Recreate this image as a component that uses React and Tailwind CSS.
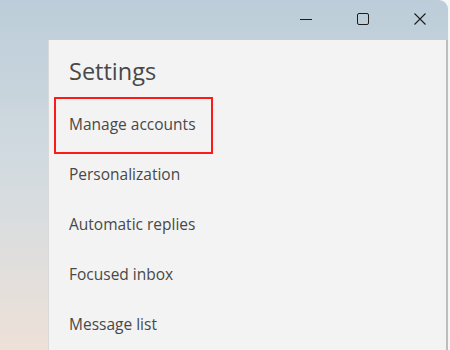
const items = ["Manage accounts", "Personalization", "Automatic replies", "Focused inbox", "Message list"];

const Min = () => (
  <svg width="12" height="12" viewBox="0 0 12 12"><path d="M0 6.5h12" stroke="#1c1c1c" strokeWidth="1" /></svg>
);
const Max = () => (
  <svg width="12" height="12" viewBox="0 0 12 12"><rect x="0.5" y="0.5" width="11" height="11" rx="1.5" fill="none" stroke="#1c1c1c" strokeWidth="1" /></svg>
);
const Close = () => (
  <svg width="12" height="12" viewBox="0 0 12 12"><path d="M0.5 0.5l11 11M11.5 0.5l-11 11" stroke="#1c1c1c" strokeWidth="1.1" /></svg>
);

const App = () => {
  return (
    <div className="w-[450px] h-[350px] bg-[#f6f6f6] flex overflow-hidden" style={{ fontFamily: '"Open Sans", "Noto Sans", sans-serif' }}>
      <div className="w-[448px] h-full rounded-tr-[9px] bg-gradient-to-b from-[#bccdd9] via-[#d3dbe0] to-[#ede1d8] flex flex-col">
        <div className="h-[40px] flex justify-end">
          <div className="w-[57px] h-[38px] flex items-center justify-center"><Min /></div>
          <div className="w-[57px] h-[38px] flex items-center justify-center"><Max /></div>
          <div className="w-[57px] h-[38px] flex items-center justify-center"><Close /></div>
        </div>
        <div className="flex-1 ml-[48px] bg-[#f3f3f3] border-l border-[#d9d9d9] border-r-2 border-r-[#bdbdbd] pl-[20px] pt-[16px] text-[#484848]">
          <div className="text-[23.5px] leading-[30px] font-normal">Settings</div>
          <div className="mt-[14px] flex flex-col">
            {items.map((t, i) => (
              <div key={t} className="h-[50px] flex items-center">
                {i === 0 ? (
                  <div className="-ml-[15px] w-[159px] h-[57px] border-2 border-[#ff1a1a] flex items-center pl-[13px] text-[15.5px]">{t}</div>
                ) : (
                  <div className="text-[15.5px]">{t}</div>
                )}
              </div>
            ))}
          </div>
        </div>
      </div>
    </div>
  );
};

export default App;
